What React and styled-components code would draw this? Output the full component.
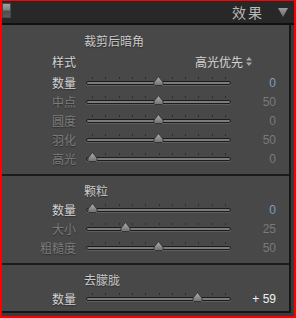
import React from "react";
import styled, { createGlobalStyle } from "styled-components";

const GlobalStyle = createGlobalStyle`
  html, body { margin: 0; padding: 0; background: #2a2a2a; }
  body { font-family: "Liberation Sans", "Noto Sans CJK SC", sans-serif; }
`;

const sections = [
  {
    title: "裁剪后暗角",
    style: "高光优先",
    rows: [
      { label: "数量", value: "0", f: 0.5, active: true, blue: true },
      { label: "中点", value: "50", f: 0.5 },
      { label: "圆度", value: "0", f: 0.5 },
      { label: "羽化", value: "50", f: 0.5 },
      { label: "高光", value: "0", f: 0 },
    ],
  },
  {
    title: "颗粒",
    rows: [
      { label: "数量", value: "0", f: 0, active: true, blue: true },
      { label: "大小", value: "25", f: 0.25 },
      { label: "粗糙度", value: "50", f: 0.5 },
    ],
  },
  {
    title: "去朦胧",
    last: true,
    rows: [{ label: "数量", value: "+ 59", f: 0.795, active: true }],
  },
];

function Thumb() {
  return (
    <svg width="11" height="10" viewBox="0 0 11 10">
      <defs>
        <linearGradient id="tg" x1="0" y1="0" x2="0" y2="1">
          <stop offset="0" stopColor="#b4b4b4" />
          <stop offset="1" stopColor="#6e6e6e" />
        </linearGradient>
      </defs>
      <path d="M5.5 0.5 L9.5 5.5 Q10.5 7 10 8.5 L9 9.5 L2 9.5 L1 8.5 Q0.5 7 1.5 5.5 Z" fill="url(#tg)" stroke="#2a2a2a" strokeWidth="0.8" />
    </svg>
  );
}

function Slider({ f }) {
  const ticks = [];
  for (let i = 0; i < 11; i++) {
    const x = 6 + (133 / 10) * i;
    ticks.push(<rect key={i} x={Math.round(x)} y="0" width="1" height="2" fill="#2c2c2c" />);
  }
  return (
    <SliderBox>
      <Ticks width="145" height="2">{ticks}</Ticks>
      <Track />
      <ThumbWrap style={{ left: 6 + f * 133 - 5.5 }}>
        <Thumb />
      </ThumbWrap>
    </SliderBox>
  );
}

function App() {
  return (
    <Frame>
      <GlobalStyle />
      <Header>
        <Grip />
        <Title>效果</Title>
        <svg width="10" height="9" viewBox="0 0 10 9">
          <defs>
            <linearGradient id="hg" x1="0" y1="0" x2="0" y2="1">
              <stop offset="0" stopColor="#9a9a9a" />
              <stop offset="1" stopColor="#6a6a6a" />
            </linearGradient>
          </defs>
          <path d="M0 0 L10 0 L5 9 Z" fill="url(#hg)" />
        </svg>
      </Header>
      <Gutter>
        <Panel>
          {sections.map((s) => (
            <Section key={s.title} $last={s.last} $first={!!s.style}>
              <Heading>{s.title}</Heading>
              {s.style && (
                <StyleRow>
                  <Label $active>样式</Label>
                  <Dropdown>
                    {s.style}
                    <svg width="6" height="9" viewBox="0 0 6 9">
                      <path d="M3 0 L6 3.5 L0 3.5 Z M0 5.5 L6 5.5 L3 9 Z" fill="#a8a8a8" />
                    </svg>
                  </Dropdown>
                </StyleRow>
              )}
              {s.rows.map((r) => (
                <Row key={r.label}>
                  <Label $active={r.active}>{r.label}</Label>
                  <Slider f={r.f} />
                  <Value $active={r.active} $blue={r.blue}>{r.value}</Value>
                </Row>
              ))}
            </Section>
          ))}
        </Panel>
      </Gutter>
    </Frame>
  );
}

const Frame = styled.div`
  width: 296px;
  height: 318px;
  box-sizing: border-box;
  border-style: solid;
  border-color: #ff0000;
  border-width: 1px 2px 2px 2px;
  display: flex;
  flex-direction: column;
  background: #3a3a3a;
`;

const Header = styled.div`
  height: 22px;
  flex: none;
  background: #282828;
  border-bottom: 2px solid #101010;
  display: flex;
  align-items: center;
  padding-right: 6px;
  svg { margin-top: 1px; }
`;

const Grip = styled.div`
  width: 7px;
  height: 13px;
  margin-top: -3px;
  border: 1px solid #4a4a4a;
  background: linear-gradient(#a0a0a0 0%, #7e7e7e 48%, #4e4e4e 52%, #5a5a5a 100%);
`;

const Title = styled.div`
  margin-left: auto;
  margin-right: 14px;
  font-size: 14px;
  letter-spacing: 2px;
  color: #b8b8b8;
  font-family: "Noto Sans CJK SC", sans-serif;
`;

const Gutter = styled.div`
  flex: 1;
  padding: 0 3px 3px 0;
  background: #3a3a3a;
  display: flex;
`;

const Panel = styled.div`
  flex: 1;
  background: #484848;
  border-right: 2px solid #151515;
  border-bottom: 2px solid #151515;
`;

const Section = styled.div`
  padding: ${(p) => (p.$first ? "7px 0 6px" : p.$last ? "6px 0 3px" : "6px 0 6px")};
  border-bottom: ${(p) => (p.$last ? "none" : "2px solid #1c1c1c")};
`;

const Heading = styled.div`
  height: 18px;
  line-height: 18px;
  padding-left: 82px;
  font-size: 12px;
  color: #cacaca;
  text-shadow: 0 1px 1px #2a2a2a;
  font-family: "Noto Sans CJK SC", sans-serif;
`;

const Row = styled.div`
  display: grid;
  grid-template-columns: 74px 145px 35px;
  column-gap: 10px;
  height: 19px;
  align-items: center;
`;

const StyleRow = styled(Row)`
  grid-template-columns: 74px 190px;
  height: 23px;
`;

const Label = styled.div`
  text-align: right;
  font-size: 12px;
  color: ${(p) => (p.$active ? "#d4d4d4" : "#7c7c7c")};
  text-shadow: 0 1px 1px #2e2e2e;
  font-family: "Noto Sans CJK SC", sans-serif;
`;

const Dropdown = styled.div`
  justify-self: end;
  margin-right: 24px;
  display: flex;
  align-items: center;
  gap: 3px;
  font-size: 12px;
  color: #d4d4d4;
  font-family: "Noto Sans CJK SC", sans-serif;
`;

const Value = styled.div`
  text-align: right;
  font-size: 12px;
  color: ${(p) => (p.$blue ? "#7f9fc4" : p.$active ? "#f0f0f0" : "#7a7a7a")};
`;

const SliderBox = styled.div`
  position: relative;
  height: 19px;
`;

const Ticks = styled.svg`
  position: absolute;
  left: 0;
  top: 4px;
  display: block;
`;

const Track = styled.div`
  position: absolute;
  left: 0;
  right: 0;
  top: 8px;
  height: 2px;
  border: 1px solid #1c1c1c;
  border-radius: 3px;
  background: #7c7c7c;
  box-shadow: 0 1px 0 #5e5e5e;
`;

const ThumbWrap = styled.div`
  position: absolute;
  top: 3px;
  width: 11px;
  height: 10px;
  svg { display: block; }
`;

export default App;
